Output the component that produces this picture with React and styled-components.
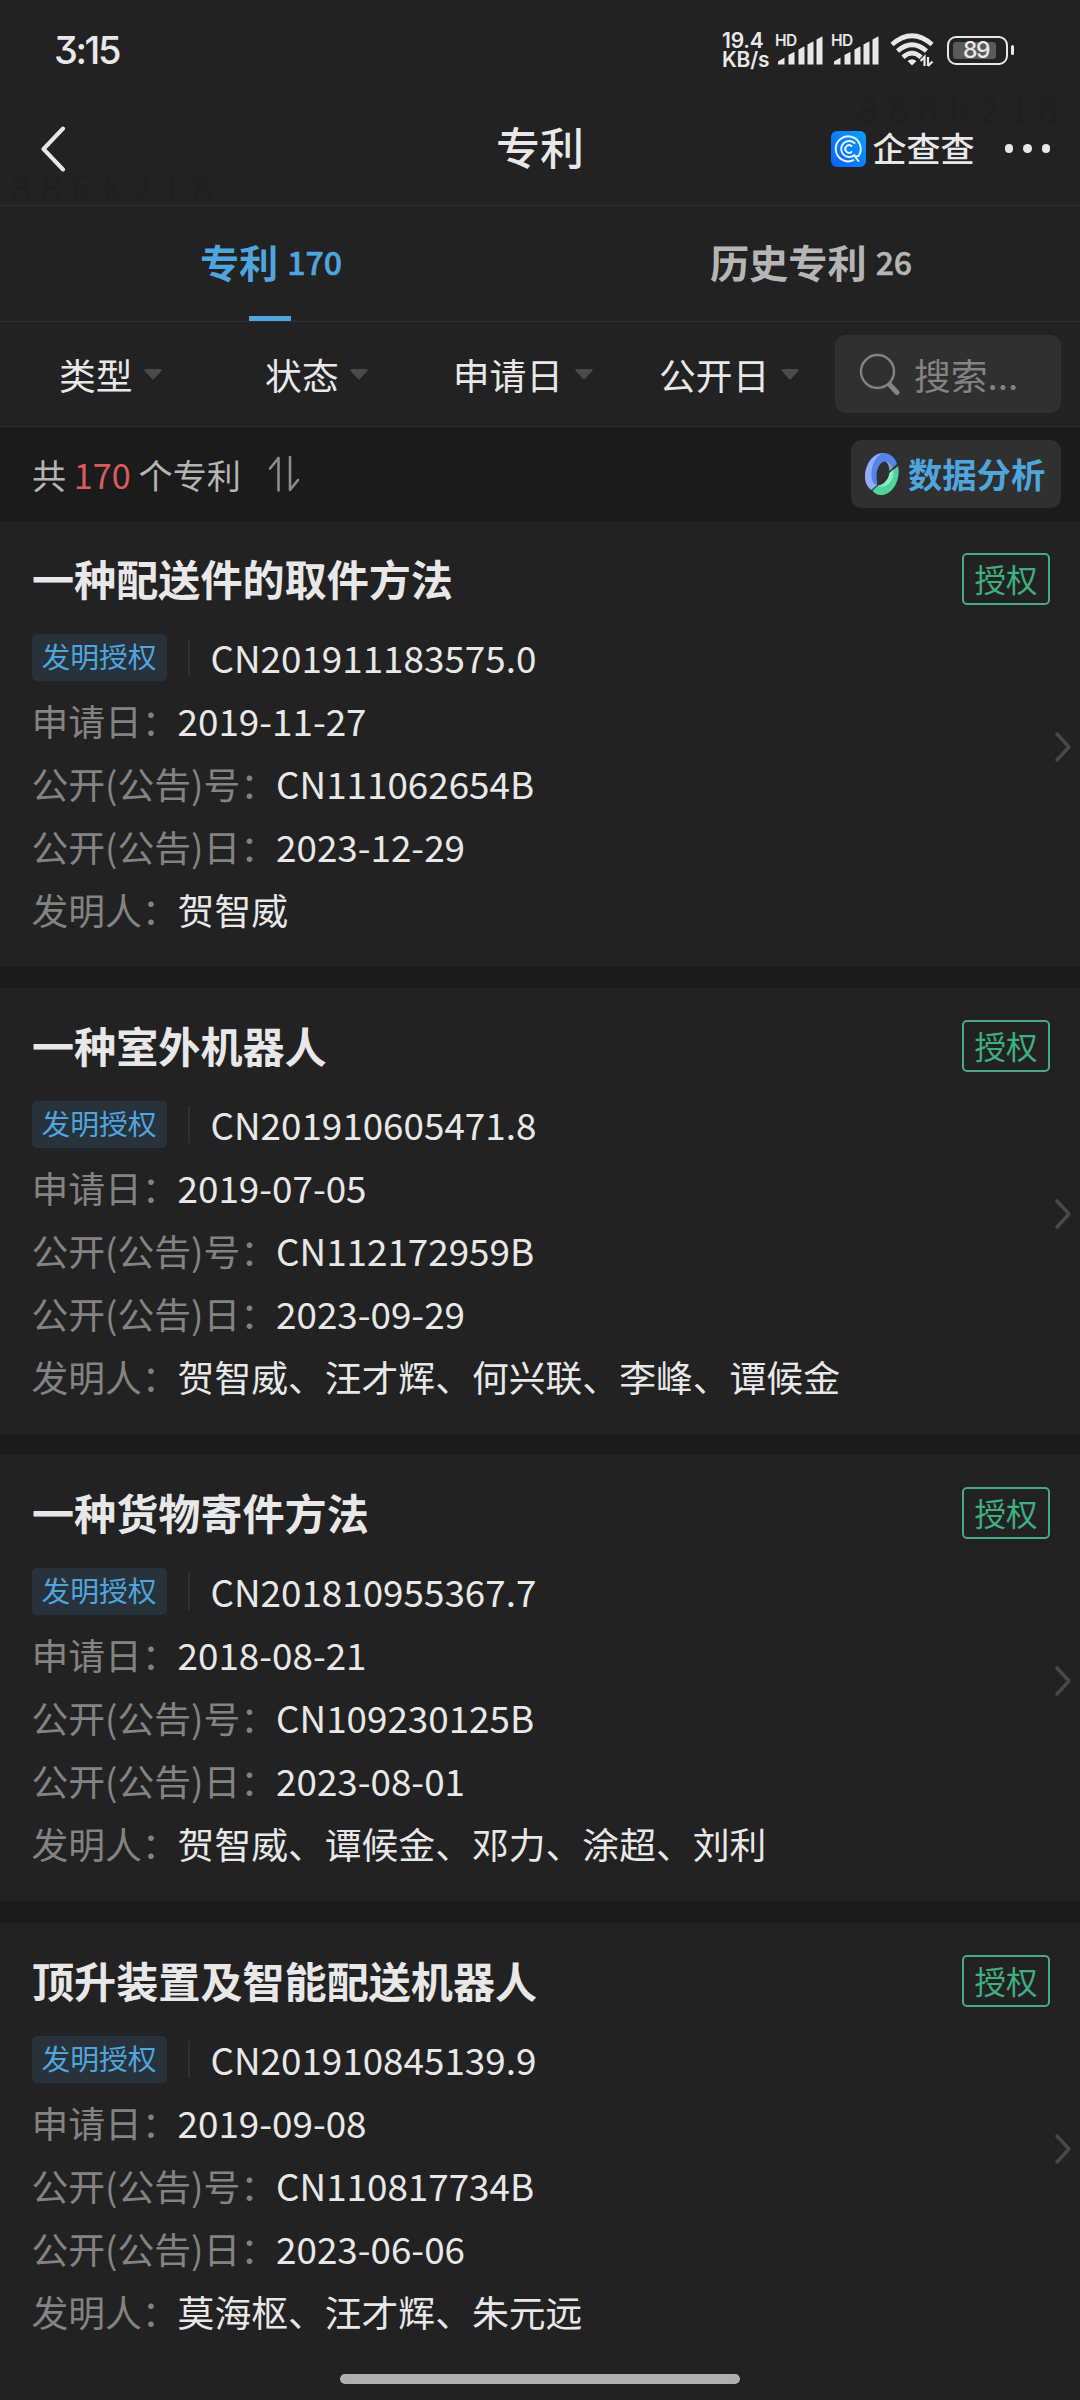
import React from "react";
import styled, { createGlobalStyle } from "styled-components";

const patents = [
  {
    title: "一种配送件的取件方法",
    number: "CN201911183575.0",
    applied: "2019-11-27",
    pubNo: "CN111062654B",
    pubDate: "2023-12-29",
    inventors: "贺智威",
  },
  {
    title: "一种室外机器人",
    number: "CN201910605471.8",
    applied: "2019-07-05",
    pubNo: "CN112172959B",
    pubDate: "2023-09-29",
    inventors: "贺智威、汪才辉、何兴联、李峰、谭候金",
  },
  {
    title: "一种货物寄件方法",
    number: "CN201810955367.7",
    applied: "2018-08-21",
    pubNo: "CN109230125B",
    pubDate: "2023-08-01",
    inventors: "贺智威、谭候金、邓力、涂超、刘利",
  },
  {
    title: "顶升装置及智能配送机器人",
    number: "CN201910845139.9",
    applied: "2019-09-08",
    pubNo: "CN110817734B",
    pubDate: "2023-06-06",
    inventors: "莫海枢、汪才辉、朱元远",
  },
];

const filters = [
  { name: "类型", left: 59 },
  { name: "状态", left: 103 },
  { name: "申请日", left: 84.5 },
  { name: "公开日", left: 66.5 },
];

function Signal() {
  return (
    <SignalBox>
      <HD>HD</HD>
      <svg width="46" height="30" viewBox="0 0 46 30" fill="#e8e8e8">
        <path d="M0 29.500v-3l6.500-4v7zM10.500 29.500v-9.500l5.500-3q.5 0 .5 .5v12zM20.500 29.500v-15l5.500-3q.5 0 .5 .5v17.500zM29.500 29.500v-20l5.500-3q.5 0 .5 .5v22.500zM38.500 29.500v-25l5.500-3q.5 0 .5 .5v27.500z" />
      </svg>
    </SignalBox>
  );
}

function WifiIcon() {
  return (
    <svg width="44" height="36" viewBox="0 0 44 36" fill="none">
      <g stroke="#e8e8e8" strokeWidth="4.600">
        <path d="M2 12.500Q22 -5 42 12.500" />
        <path d="M7.500 19Q22 6.500 36.500 19" />
        <path d="M13 25.200Q22 17 31 25.200" />
      </g>
      <path d="M17.500 29Q22 25.500 26.500 29L22 33.500z" fill="#e8e8e8" />
      <path
        d="M30.500 29l4-4v9M38 34v-9M38 34l4.500-4.500"
        stroke="#e8e8e8"
        strokeWidth="2.200"
      />
    </svg>
  );
}

function LogoIcon() {
  return (
    <svg width="35" height="36" viewBox="0 0 35 36" fill="none">
      <defs>
        <linearGradient id="logo" x1="0" y1="1" x2="1" y2="0">
          <stop offset="0" stopColor="#0a60ff" />
          <stop offset="1" stopColor="#08a0ff" />
        </linearGradient>
      </defs>
      <rect width="35" height="36" rx="6" fill="url(#logo)" />
      <g stroke="#eaf4ff" strokeWidth="1.900" strokeLinecap="round">
        <path d="M22.500 29.200A12.500 12.500 0 1 1 27.500 25L24 25.500L27.500 30" />
        <path d="M23.500 12A8 8 0 1 0 23.500 24" />
        <path d="M20.500 15A3.800 3.800 0 1 0 20.500 21" />
      </g>
    </svg>
  );
}

function RingIcon() {
  return (
    <svg width="34" height="42" viewBox="0 0 34 42">
      <path d="M18 0C8 0 0 11 0 24C0 30 3 35 6.500 37L12 32L10 24C10 12 14 4 22 1z" fill="#93aef8" />
      <path d="M18 0C25 0 30 4 32 11L24.500 18C24.500 12 23 8.500 20 8.500C16 8.500 11.500 14 11.500 24C11.500 28 13 30 11.500 32C8 31 6.500 27 6.500 22C6.500 11 11 3 18 0z" fill="#5385e8" />
      <path d="M20 8.500C24 8.500 27 12 27.500 15L24.500 18C24 13 23 10 20 8.500z" fill="#8e9ac8" />
      <path d="M33 13C36 26 28 42 16 42C12 42 9 40 7.500 37.500L13 32.500C17 33 23 28 24.500 20z" fill="#53d39c" />
      <path d="M24.500 20L28.500 16.500C30 26 22 37 13 32.500C19 32 24 26 24.500 20z" fill="#8aebc6" />
    </svg>
  );
}

export default function App() {
  return (
    <Page>
      <GlobalStyle />
      <StatusBar>
        <Clock>3:15</Clock>
        <StatusIcons>
          <Speed>
            <div>19.4</div>
            <div>KB/s</div>
          </Speed>
          <Signal />
          <Signal />
          <WifiIcon />
          <Battery>
            <BatteryBody>
              <BatteryLevel>89</BatteryLevel>
            </BatteryBody>
            <BatteryCap />
          </Battery>
        </StatusIcons>
      </StatusBar>

      <Header>
        <HeaderSide>
          <svg width="26" height="46" viewBox="0 0 26 46" fill="none">
            <path
              d="M22 2.500L2.500 23L22 43.500"
              stroke="#e8e8e8"
              strokeWidth="4"
              strokeLinecap="round"
              strokeLinejoin="round"
            />
          </svg>
        </HeaderSide>
        <HeaderTitle>专利</HeaderTitle>
        <HeaderSide $right>
          <LogoIcon />
          <LogoText>企查查</LogoText>
          <Dots>
            <i />
            <i />
            <i />
          </Dots>
        </HeaderSide>
        <Watermark $x={11} $y={87}>886k218</Watermark>
        <Watermark $x={858} $y={9}>886k218</Watermark>
      </Header>

      <Tabs>
        <Tab $active>
          专利<Count>170</Count>
        </Tab>
        <Tab>
          历史专利<Count>26</Count>
        </Tab>
      </Tabs>

      <FilterBar>
        {filters.map((f) => (
          <Filter key={f.name} $left={f.left}>
            {f.name}
            <svg width="18" height="11" viewBox="0 0 18 11">
              <path d="M1.500 0h15q2 .5 .8 2L10 10q-1 1-2 0L.7 2Q-.5 .5 1.500 0z" fill="#4a4a4a" />
            </svg>
          </Filter>
        ))}
        <Search>
          <svg width="42" height="43" viewBox="0 0 42 43" fill="none" stroke="#838383">
            <circle cx="18.500" cy="18.500" r="16.500" strokeWidth="2.400" />
            <path d="M31 32l7 7.500" strokeWidth="5" strokeLinecap="round" />
          </svg>
          搜索...
        </Search>
      </FilterBar>

      <Summary>
        <Total>
          共 <em>170</em> 个专利
        </Total>
        <svg width="32" height="38" viewBox="0 0 32 38" fill="none">
          <path
            d="M2 13.500L10.500 3V35.500M22 2V35L30 25"
            stroke="#8c8c8c"
            strokeWidth="2.600"
            strokeLinecap="round"
            strokeLinejoin="round"
          />
        </svg>
        <Analysis>
          <RingIcon />
          <span>数据分析</span>
        </Analysis>
      </Summary>

      <List>
        {patents.map((p) => (
          <Card key={p.number}>
            <CardTop>
              <Title>{p.title}</Title>
              <Badge>授权</Badge>
            </CardTop>
            <Row>
              <Tag>发明授权</Tag>
              <Divider />
              {p.number}
            </Row>
            <Row>
              <Label>申请日：</Label>
              {p.applied}
            </Row>
            <Row>
              <Label>公开(公告)号：</Label>
              {p.pubNo}
            </Row>
            <Row>
              <Label>公开(公告)日：</Label>
              {p.pubDate}
            </Row>
            <Row>
              <Label>发明人：</Label>
              {p.inventors}
            </Row>
            <Arrow width="18" height="32" viewBox="0 0 18 32" fill="none">
              <path
                d="M3 3L15 16L3 29"
                stroke="#484848"
                strokeWidth="3.600"
                strokeLinecap="round"
                strokeLinejoin="round"
              />
            </Arrow>
          </Card>
        ))}
      </List>
      <HomeBar />
    </Page>
  );
}

const GlobalStyle = createGlobalStyle`
  * {
    box-sizing: border-box;
  }

  body {
    margin: 0;
    background: #1b1b1b;
  }

  svg {
    display: block;
    flex-shrink: 0;
  }
`;

const Page = styled.div`
  position: relative;
  width: 1080px;
  height: 2400px;
  overflow: hidden;
  background: #1b1b1b;
  color: #e8e8e8;
  font-family: "Noto Sans CJK SC", sans-serif;
  white-space: nowrap;
`;

const StatusBar = styled.div`
  height: 100px;
  padding: 0 66px 0 54px;
  display: flex;
  align-items: center;
  justify-content: space-between;
  background: #222222;
  font-family: Inter, "Noto Sans CJK SC", sans-serif;
`;

const Clock = styled.div`
  font-size: 38px;
  font-weight: 500;
  letter-spacing: -2.4px;
  font-feature-settings: "cv09";
`;

const StatusIcons = styled.div`
  display: flex;
  align-items: center;
`;

const Speed = styled.div`
  width: 54px;
  font-size: 21px;
  font-weight: 600;
  line-height: 19px;
  letter-spacing: -0.2px;
`;

const SignalBox = styled.div`
  position: relative;
  width: 56px;
  display: flex;
  padding-left: 2px;

  + svg {
    margin-left: 2px;
  }
`;

const HD = styled.span`
  position: absolute;
  left: -1px;
  top: -2px;
  font-size: 15.5px;
  font-weight: 600;
  line-height: 15px;
  letter-spacing: -0.5px;
`;

const Battery = styled.div`
  display: flex;
  align-items: center;
  margin-left: 13px;
`;

const BatteryBody = styled.div`
  width: 61px;
  height: 29px;
  padding: 4px;
  border: 2.5px solid #e8e8e8;
  border-radius: 9px;
`;

const BatteryLevel = styled.div`
  width: 43px;
  height: 100%;
  border-radius: 3px;
  background: #5a5a5a;
  display: flex;
  align-items: center;
  padding-left: 10px;
  font-size: 23px;
  font-weight: 500;
  letter-spacing: -1.5px;
`;

const BatteryCap = styled.div`
  width: 3px;
  height: 10px;
  margin-left: 3px;
  border-radius: 2px;
  background: #e8e8e8;
`;

const Header = styled.div`
  position: relative;
  height: 106px;
  padding: 0 30px 8px 41px;
  display: flex;
  align-items: center;
  background: #222222;
  border-bottom: 1px solid #303030;
`;

const HeaderSide = styled.div`
  flex: 1;
  display: flex;
  align-items: center;
  justify-content: ${(props) => (props.$right ? "flex-end" : "flex-start")};
`;

const HeaderTitle = styled.div`
  margin: 0 11px 5px 0;
  font-size: 44px;
  font-weight: 500;
  line-height: 60px;
`;

const LogoText = styled.div`
  margin-left: 7px;
  padding-bottom: 2px;
  font-size: 34px;
  line-height: 34px;
  font-weight: 500;
`;

const Dots = styled.div`
  display: flex;
  gap: 10px;
  margin-left: 30px;

  > i {
    width: 8.5px;
    height: 8.5px;
    border-radius: 50%;
    background: #e8e8e8;
  }
`;

const Watermark = styled.span`
  position: absolute;
  left: ${(props) => props.$x}px;
  top: ${(props) => props.$y - 17}px;
  font-size: 37px;
  font-weight: 300;
  line-height: 30px;
  letter-spacing: 10.5px;
  color: #1f1f1f;
`;

const Tabs = styled.div`
  height: 116px;
  display: flex;
  background: #222222;
  border-bottom: 1px solid #303030;
`;

const Tab = styled.div`
  flex: 1;
  display: flex;
  align-items: center;
  justify-content: center;
  position: relative;
  padding: 0 0 5px 2px;
  font-size: 39.2px;
  font-weight: 700;
  color: ${(props) => (props.$active ? "#4fa5de" : "#b5b5b5")};

  &::after {
    content: "";
    display: ${(props) => (props.$active ? "block" : "none")};
    position: absolute;
    left: 249px;
    bottom: 0;
    width: 42px;
    height: 5px;
    background: #4fa5de;
  }
`;

const Count = styled.span`
  margin-left: 9px;
  font-size: 32px;
  font-weight: 500;
  -webkit-text-stroke: 0.6px currentColor;
`;

const FilterBar = styled.div`
  height: 105px;
  display: flex;
  align-items: center;
  background: #222222;
  border-bottom: 1px solid #303030;
  font-size: 36.8px;
`;

const Filter = styled.div`
  display: flex;
  align-items: center;
  gap: 11.5px;
  margin-left: ${(props) => props.$left}px;
`;

const Search = styled.div`
  width: 226px;
  height: 78px;
  margin-left: auto;
  margin-right: 19px;
  padding-left: 24px;
  display: flex;
  align-items: center;
  gap: 13px;
  border-radius: 10px;
  background: #303030;
  color: #838383;
`;

const Summary = styled.div`
  height: 94px;
  padding: 0 19px 0 32px;
  display: flex;
  align-items: center;
`;

const Total = styled.div`
  margin-right: 27px;
  font-size: 34.2px;
  color: #b5b5b5;

  > em {
    font-style: normal;
    color: #d85c5c;
  }
`;

const Analysis = styled.div`
  width: 210px;
  height: 68px;
  margin-left: auto;
  padding-left: 14px;
  display: flex;
  align-items: center;
  gap: 9px;
  border-radius: 10px;
  background: #303030;
  color: #4fa5de;
  font-size: 34.3px;
  font-weight: 700;

  > span {
    padding-bottom: 2px;
  }
`;

const List = styled.div`
  display: flex;
  flex-direction: column;
  gap: 21.2px;
`;

const Card = styled.div`
  position: relative;
  height: 446px;
  padding: 29px 30px 0 32px;
  background: #222222;

  &:last-child {
    height: 478px;
  }
`;

const CardTop = styled.div`
  display: flex;
  align-items: center;
  justify-content: space-between;
  height: 56px;
  margin-bottom: 20px;
`;

const Title = styled.h3`
  margin: 0;
  font-size: 42.1px;
  font-weight: 700;
  line-height: 56px;
`;

const Badge = styled.div`
  width: 88px;
  height: 52px;
  margin-top: 2px;
  border: 2px solid #4aa983;
  border-radius: 5px;
  color: #3fae80;
  font-size: 31.5px;
  line-height: 47px;
  text-align: center;
`;

const Row = styled.div`
  height: 63px;
  display: flex;
  align-items: center;
  font-size: 36.8px;
  line-height: 63px;
`;

const Label = styled.span`
  margin-left: -0.6px;
  margin-right: -1px;
  color: #838383;
`;

const Tag = styled.span`
  width: 135px;
  height: 47px;
  padding-right: 1px;
  border-radius: 5px;
  background: #27323b;
  color: #4fa5de;
  font-size: 28.8px;
  line-height: 44px;
  text-align: center;
`;

const Divider = styled.i`
  width: 2px;
  height: 37px;
  margin: 0 20.5px 0 21px;
  background: #303030;
`;

const Arrow = styled.svg`
  position: absolute;
  right: 8px;
  top: 210px;
`;

const HomeBar = styled.div`
  position: absolute;
  left: 340px;
  bottom: 16px;
  width: 400px;
  height: 10px;
  border-radius: 5px;
  background: #b0b0b0;
`;
